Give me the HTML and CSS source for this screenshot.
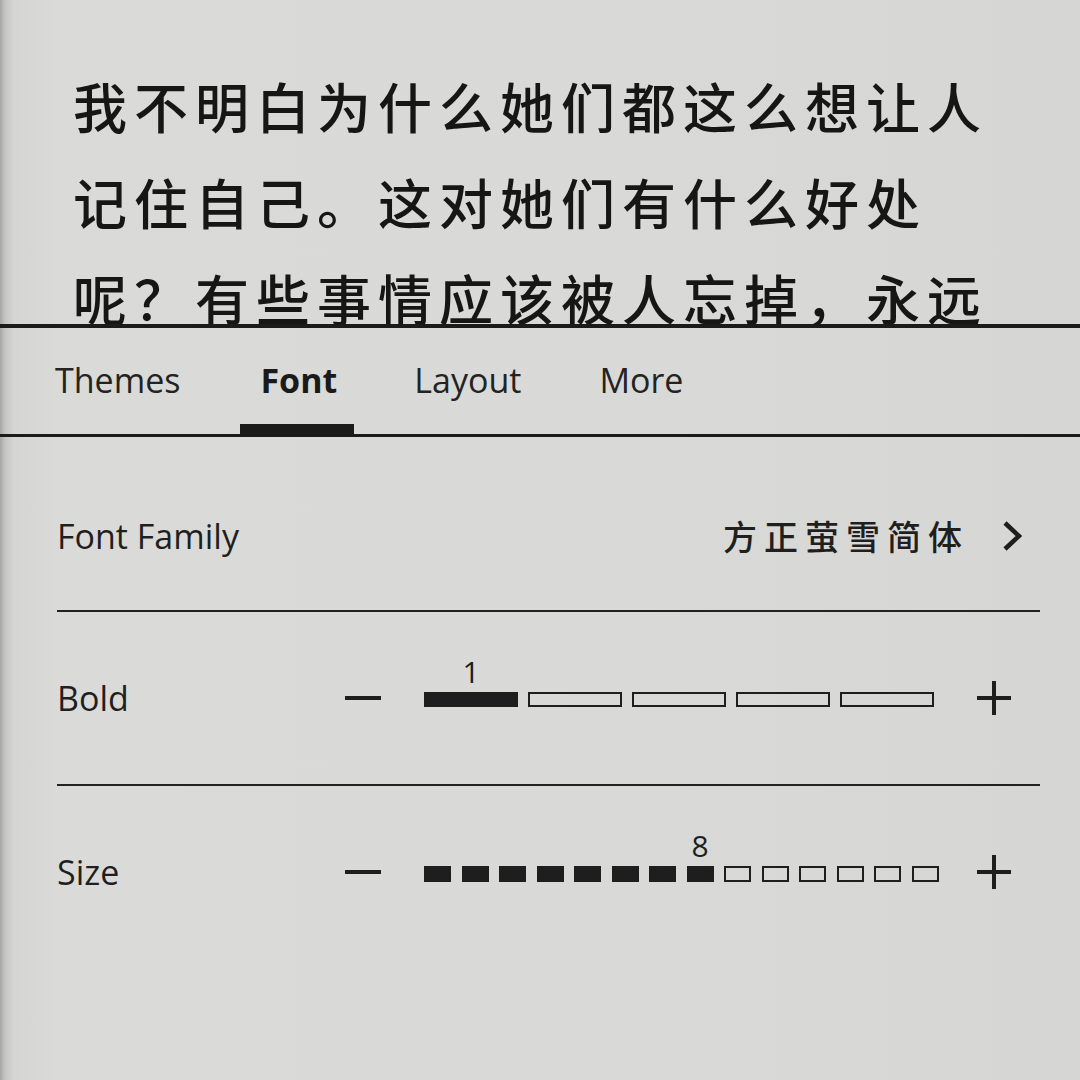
FILE: index.html
```html
<!DOCTYPE html>
<html lang="zh-CN">
<head>
<meta charset="utf-8">
<title>Font settings</title>
<link rel="stylesheet" href="styles.css">
</head>
<body>
<div class="screen">
  <div class="reader">
    <p class="line">我不明白为什么她们都这么想让人</p>
    <p class="line">记住自己。这对她们有什么好处</p>
    <p class="line">呢？有些事情应该被人忘掉，永远</p>
  </div>
  <div class="panel">
    <nav class="tabs">
      <span class="tab">Themes</span>
      <span class="tab active">Font</span>
      <span class="tab">Layout</span>
      <span class="tab">More</span>
    </nav>
    <div class="settings">
      <div class="row family-row">
        <span class="label">Font Family</span>
        <span class="value">方正萤雪简体</span>
        <svg class="chevron" viewBox="0 0 20 30" aria-hidden="true"><path d="M3 2 L17 15 L3 28" fill="none" stroke="#1e1e1e" stroke-width="4.5" stroke-linejoin="miter"/></svg>
      </div>
      <div class="row slider-row divided">
        <span class="label">Bold</span>
        <span class="minus"></span>
        <div class="track bold">
          <span class="seg wide on"><span class="val">1</span></span>
          <span class="seg wide"></span>
          <span class="seg wide"></span>
          <span class="seg wide"></span>
          <span class="seg wide"></span>
        </div>
        <svg class="plus" viewBox="0 0 34 34" aria-hidden="true"><path d="M17 0 V34 M0 17 H34" stroke="#1e1e1e" stroke-width="4"/></svg>
      </div>
      <div class="row slider-row">
        <span class="label">Size</span>
        <span class="minus"></span>
        <div class="track size">
          <span class="seg sq on"></span>
          <span class="seg sq on"></span>
          <span class="seg sq on"></span>
          <span class="seg sq on"></span>
          <span class="seg sq on"></span>
          <span class="seg sq on"></span>
          <span class="seg sq on"></span>
          <span class="seg sq on"><span class="val">8</span></span>
          <span class="seg sq"></span>
          <span class="seg sq"></span>
          <span class="seg sq"></span>
          <span class="seg sq"></span>
          <span class="seg sq"></span>
          <span class="seg sq"></span>
        </div>
        <svg class="plus" viewBox="0 0 34 34" aria-hidden="true"><path d="M17 0 V34 M0 17 H34" stroke="#1e1e1e" stroke-width="4"/></svg>
      </div>
    </div>
  </div>
</div>
</body>
</html>
```
FILE: styles.css
```css
html, body {
  margin: 0;
  padding: 0;
  height: 1080px;
  overflow: hidden;
}

body {
  background: #d8d9d6;
  font-family: "Open Sans", "Noto Sans", sans-serif;
  color: #1e1e1e;
}

.screen {
  height: 1080px;
  background: linear-gradient(to right, #a6a7a4 0, #c4c5c2 5px, #d5d6d3 14px, #dadbd8 60px, #d9dad7 60%, #d6d7d4 100%);
}

.reader {
  box-sizing: border-box;
  height: 324px;
  overflow: hidden;
  padding: 58px 0 0 73px;
  font-family: "Noto Sans CJK SC", "Noto Sans CJK TC", sans-serif;
  font-size: 54px;
  font-weight: 500;
  letter-spacing: 7px;
  line-height: 96px;
  color: #161616;
}

.line {
  margin: 0;
  white-space: nowrap;
}

.panel {
  border-top: 4px solid #1b1b1b;
}

.tabs {
  display: flex;
  gap: 42px;
  height: 106px;
  padding-left: 37px;
  border-bottom: 3px solid #1b1b1b;
}

.tab {
  padding: 32px 18px 0;
  font-size: 34px;
  font-weight: 500;
  line-height: 40px;
  color: #232323;
}

.tab.active {
  padding: 32px 17px 0 20px;
  font-weight: 700;
  color: #1a1a1a;
  box-shadow: inset 0 -10px 0 #1b1b1b;
}

.settings {
  padding: 0 40px 0 57px;
}

.row {
  display: flex;
  align-items: center;
  font-size: 34px;
  font-weight: 500;
  line-height: 40px;
  color: #1f1f1f;
}

.family-row {
  padding: 79px 0 54px;
  border-bottom: 2px solid #222;
}

.value {
  margin-left: auto;
  font-family: "Noto Sans CJK SC", sans-serif;
  font-size: 34px;
  font-weight: 500;
  letter-spacing: 7px;
}

.chevron {
  width: 20px;
  height: 30px;
  margin-left: 33px;
  margin-right: 18px;
}

.slider-row {
  padding: 66px 0;
}

.slider-row.divided {
  border-bottom: 2px solid #222;
}

.slider-row .label {
  width: 288px;
}

.minus {
  width: 36px;
  height: 4px;
  background: #1e1e1e;
}

.track {
  display: flex;
  margin-left: 43px;
  margin-top: 3px;
}

.track.bold {
  gap: 10px;
}

.track.size {
  gap: 10.5px;
}

.seg {
  position: relative;
  box-sizing: border-box;
  height: 15px;
  border: 2px solid #1e1e1e;
}

.seg.wide {
  width: 94px;
}

.seg.sq {
  width: 27px;
  height: 16px;
}

.seg.on {
  background: #1e1e1e;
}

.val {
  position: absolute;
  left: -12px;
  right: -12px;
  bottom: calc(100% + 8px);
  text-align: center;
  font-size: 30px;
  font-weight: 500;
  line-height: 29px;
  color: #1e1e1e;
}

.plus {
  width: 34px;
  height: 34px;
  margin-left: auto;
  margin-right: 29px;
}
```
